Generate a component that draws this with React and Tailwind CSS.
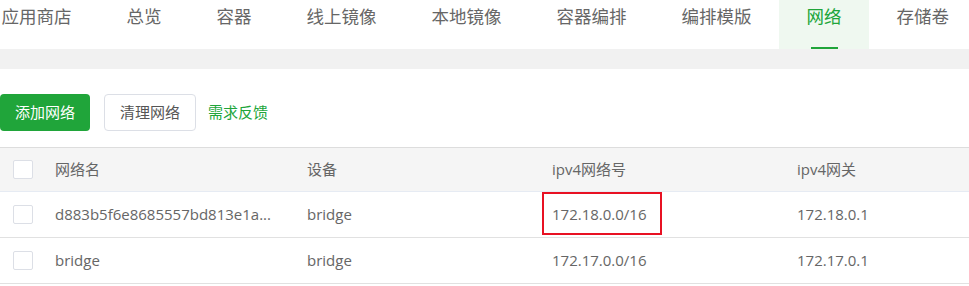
import React from 'react';

const tabs = ['应用商店', '总览', '容器', '线上镜像', '本地镜像', '容器编排', '编排模版', '网络', '存储卷'];

const rows = [
  { name: 'd883b5f6e8685557bd813e1a...', device: 'bridge', subnet: '172.18.0.0/16', gateway: '172.18.0.1', marked: true },
  { name: 'bridge', device: 'bridge', subnet: '172.17.0.0/16', gateway: '172.17.0.1' },
];

const Checkbox = () => (
  <span className="block w-[20px] h-[19px] rounded-[2px] border border-[#dcdfe6] bg-white" />
);

const App = () => {
  const font = { fontFamily: '"Open Sans", "Noto Sans CJK SC", sans-serif' };

  return (
    <div className="w-[969px] h-[286px] bg-white overflow-hidden" style={font}>
      {/* Tabs */}
      <div className="flex h-[49px] -ml-[26px] whitespace-nowrap">
        {tabs.map((tab) => {
          const active = tab === '网络';
          return (
            <div
              key={tab}
              className={`relative shrink-0 px-[27.5px] h-[49px] leading-[33px] text-[17.5px] ${
                active ? 'bg-[#eff8f0] text-[#20a53a]' : 'text-[#666]'
              }`}
            >
              {tab}
              {active && (
                <span className="absolute left-[32px] bottom-0 w-[27px] h-[2px] bg-[#20a53a]" />
              )}
            </div>
          );
        })}
      </div>

      {/* Grey band */}
      <div className="h-[20px] bg-[#f1f1f1]" />

      {/* Toolbar */}
      <div className="flex items-center h-[78px] pt-[9px] text-[15px]">
        <button className="h-[37px] px-[15px] rounded-[4px] bg-[#20a53a] text-white">添加网络</button>
        <button className="ml-[14px] h-[37px] px-[15px] rounded-[4px] border border-[#dcdfe6] bg-white text-[#555]">
          清理网络
        </button>
        <span className="ml-[12px] text-[#20a53a]">需求反馈</span>
      </div>

      {/* Table */}
      <div className="text-[15px] text-[#666]">
        <div className="flex items-center h-[45px] bg-[#f5f5f5] border-t border-[#dddddd] border-b border-b-[#e6ebf3]">
          <div className="w-[45px] pl-[13px] shrink-0">
            <Checkbox />
          </div>
          <div className="w-[252px] pl-[10px] shrink-0">网络名</div>
          <div className="w-[245px] pl-[10px] shrink-0">设备</div>
          <div className="w-[245px] pl-[10px] shrink-0">ipv4网络号</div>
          <div className="flex-1 pl-[10px]">ipv4网关</div>
        </div>
        {rows.map((row) => (
          <div key={row.subnet} className="flex items-center h-[46px] border-b border-[#e1e1e1]">
            <div className="w-[45px] pl-[13px] shrink-0">
              <Checkbox />
            </div>
            <div className="w-[252px] pl-[10px] shrink-0 truncate">{row.name}</div>
            <div className="w-[245px] pl-[10px] shrink-0">{row.device}</div>
            <div className="relative w-[245px] h-full flex items-center pl-[10px] shrink-0">
              {row.subnet}
              {row.marked && (
                <span className="absolute left-0 top-0 w-[120px] h-[43px] border-2 border-[#e81123]" />
              )}
            </div>
            <div className="flex-1 pl-[10px]">{row.gateway}</div>
          </div>
        ))}
      </div>
    </div>
  );
};

export default App;
